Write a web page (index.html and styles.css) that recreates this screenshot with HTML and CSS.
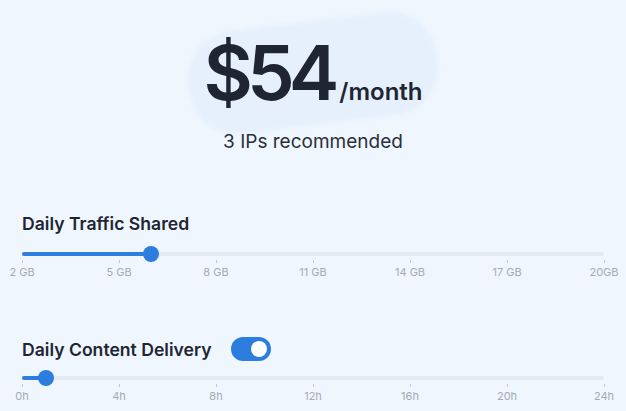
FILE: index.html
```html
<!DOCTYPE html>
<html lang="en">
<head>
    <meta charset="UTF-8">
    <title>Pricing</title>
    <link rel="stylesheet" href="styles.css">
</head>
<body>
    <div class="calc">
        <div class="price">
            <div class="price-blob"></div>
            <div class="price-line">
                <span class="price-amount">$54</span>
                <span class="price-unit">/month</span>
            </div>
            <div class="price-note">3 IPs recommended</div>
        </div>

        <div class="option">
            <div class="option-head">
                <span class="option-title">Daily Traffic Shared</span>
            </div>
            <div class="slider">
                <div class="track">
                    <div class="fill" style="width: 22.2%"></div>
                    <div class="thumb" style="left: 22.2%"></div>
                </div>
                <div class="ticks">
                    <span>2 GB</span>
                    <span>5 GB</span>
                    <span>8 GB</span>
                    <span>11 GB</span>
                    <span>14 GB</span>
                    <span>17 GB</span>
                    <span>20GB</span>
                </div>
            </div>
        </div>

        <div class="option option-delivery">
            <div class="option-head">
                <span class="option-title">Daily Content Delivery</span>
                <span class="toggle on"><span class="knob"></span></span>
            </div>
            <div class="slider">
                <div class="track">
                    <div class="fill" style="width: 4.17%"></div>
                    <div class="thumb" style="left: 4.17%"></div>
                </div>
                <div class="ticks">
                    <span>0h</span>
                    <span>4h</span>
                    <span>8h</span>
                    <span>12h</span>
                    <span>16h</span>
                    <span>20h</span>
                    <span>24h</span>
                </div>
            </div>
        </div>
    </div>
</body>
</html>
```

FILE: styles.css
```css
* {
    margin: 0;
    padding: 0;
    box-sizing: border-box;
}

body {
    background: #eff6fe;
    font-family: Inter, "Noto Sans", sans-serif;
    color: #1f2532;
    overflow: hidden;
}

.calc {
    width: 626px;
    height: 411px;
    padding: 0 22px;
}

/* price header */
.price {
    position: relative;
    display: flex;
    flex-direction: column;
    align-items: center;
    padding-top: 30px;
}

/* soft shape behind the price */
.price-blob {
    position: absolute;
    top: 21px;
    left: 166px;
    width: 250px;
    height: 104px;
    border-radius: 48px;
    background: #e6f0fc;
    transform: rotate(-7deg);
    filter: blur(2px);
}

.price-line {
    position: relative;
    display: flex;
    align-items: baseline;
    gap: 6px;
}

.price-amount {
    font-size: 76px;
    font-weight: 600;
    letter-spacing: -6px;
    line-height: 84px;
}

.price-unit {
    font-size: 24px;
    font-weight: 600;
}

.price-note {
    position: relative;
    margin-top: 16px;
    font-size: 19px;
    color: #2a2f3a;
}

/* option rows */
.option {
    margin-top: 58px;
}

.option-delivery {
    margin-top: 58px;
}

.option-head {
    display: flex;
    align-items: center;
    gap: 19px;
    height: 24px;
}

.option-title {
    font-size: 17.6px;
    font-weight: 600;
}

.toggle {
    width: 40px;
    height: 24px;
    border-radius: 12px;
    background: #2d7ddf;
    display: flex;
    align-items: center;
    justify-content: flex-end;
    padding: 0 4px;
}

.knob {
    width: 16px;
    height: 16px;
    border-radius: 50%;
    background: #fff;
}

.slider {
    margin-top: 17px;
}

.option-delivery .slider {
    margin-top: 15px;
}

.track {
    position: relative;
    height: 4px;
    border-radius: 2px;
    background: #e4eaf1;
}

.fill {
    height: 4px;
    border-radius: 2px;
    background: #2d7ddf;
}

.thumb {
    position: absolute;
    top: -6px;
    width: 16px;
    height: 16px;
    margin-left: -8px;
    border-radius: 50%;
    background: #2d7ddf;
}

.ticks {
    display: flex;
    justify-content: space-between;
    margin-top: 4px;
}

.ticks span {
    position: relative;
    width: 0;
    display: flex;
    justify-content: center;
    white-space: nowrap;
    padding-top: 5px;
    font-size: 11px;
    color: #a4abb5;
}

.ticks span::before {
    content: "";
    position: absolute;
    top: 0;
    left: 0;
    width: 1px;
    height: 3px;
    background: #c3c9d0;
}
```
